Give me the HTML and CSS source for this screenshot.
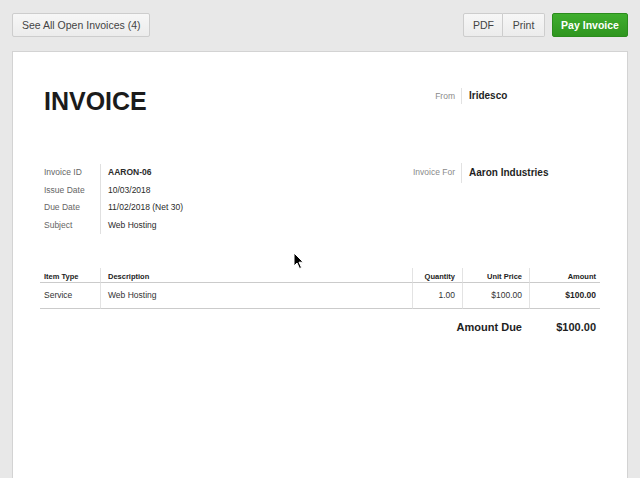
FILE: index.html
```html
<!DOCTYPE html>
<html lang="en">
<head>
<meta charset="utf-8">
<title>Invoice AARON-06</title>
<link rel="stylesheet" href="styles.css">
</head>
<body>
<div class="toolbar">
  <button class="btn">See All Open Invoices (4)</button>
  <div class="actions">
    <div class="btn-group">
      <button class="btn">PDF</button>
      <button class="btn">Print</button>
    </div>
    <button class="btn btn-pay">Pay Invoice</button>
  </div>
</div>

<div class="card">
  <div class="head-row">
    <h1 class="title">INVOICE</h1>
    <div class="party party-from">
      <span class="party-label">From</span>
      <span class="party-value">Iridesco</span>
    </div>
  </div>

  <div class="head-row details-row">
    <div class="meta">
      <div class="meta-label">Invoice ID</div><div class="meta-value strong">AARON-06</div>
      <div class="meta-label">Issue Date</div><div class="meta-value">10/03/2018</div>
      <div class="meta-label">Due Date</div><div class="meta-value">11/02/2018 (Net 30)</div>
      <div class="meta-label">Subject</div><div class="meta-value">Web Hosting</div>
    </div>
    <div class="party party-for">
      <span class="party-label">Invoice For</span>
      <span class="party-value">Aaron Industries</span>
    </div>
  </div>

  <table class="items">
    <colgroup>
      <col class="c-type"><col class="c-desc"><col class="c-qty"><col class="c-price"><col class="c-amount">
    </colgroup>
    <thead>
      <tr>
        <th class="first">Item Type</th>
        <th>Description</th>
        <th class="num">Quantity</th>
        <th class="num">Unit Price</th>
        <th class="num last">Amount</th>
      </tr>
    </thead>
    <tbody>
      <tr>
        <td class="first">Service</td>
        <td>Web Hosting</td>
        <td class="num">1.00</td>
        <td class="num">$100.00</td>
        <td class="num last strong">$100.00</td>
      </tr>
    </tbody>
    <tfoot>
      <tr>
        <td colspan="4" class="due-label">Amount Due</td>
        <td class="due-value">$100.00</td>
      </tr>
    </tfoot>
  </table>
</div>

<svg class="cursor" width="12" height="18" viewBox="0 0 12 18" aria-hidden="true">
  <path d="M1 1 L1 14 L4 11 L6.5 16.5 L8.5 15.6 L6 10.2 L10.2 10.2 Z" fill="#000" stroke="#fff" stroke-width="1"/>
</svg>
</body>
</html>
```

FILE: styles.css
```css
html, body {
  margin: 0;
  padding: 0;
}

body {
  background: #e8e8e8;
  font-family: "Liberation Sans", Arial, Helvetica, sans-serif;
  color: #222;
  height: 478px;
  overflow: hidden;
  position: relative;
}

.toolbar {
  display: flex;
  justify-content: space-between;
  align-items: flex-start;
  padding: 13px 12px 0;
}

.actions {
  display: flex;
  gap: 7px;
}

.btn-group {
  display: flex;
}

.btn {
  box-sizing: border-box;
  height: 24px;
  margin: 0;
  padding: 0 9px;
  border: 1px solid #cdcdcd;
  border-radius: 2px;
  background: linear-gradient(#f7f7f7, #ececec);
  font-family: "Liberation Sans", Arial, sans-serif;
  font-size: 10.5px;
  color: #444;
  line-height: 22px;
}

.btn-group .btn {
  padding: 0 9px;
}

.btn-group .btn:first-child {
  border-radius: 2px 0 0 2px;
  width: 40px;
}

.btn-group .btn:last-child {
  border-radius: 0 2px 2px 0;
  border-left: none;
  width: 42px;
}

.btn-pay {
  width: 76px;
  padding: 0;
  background: linear-gradient(#3fae2e, #2f961f);
  border-color: #2b8c1d;
  color: #fff;
  font-weight: bold;
}

.card {
  box-sizing: border-box;
  margin: 14px 12px 0;
  background: #fff;
  border: 1px solid #d3d3d3;
  border-bottom: none;
  padding: 34px 27px 0;
  height: 427px;
}

.head-row {
  display: flex;
  justify-content: space-between;
  align-items: flex-start;
}

.title {
  margin: 0;
  padding-left: 4px;
  font-size: 25px;
  line-height: 30px;
  font-weight: bold;
  color: #1b1b1b;
}

.party {
  display: flex;
  align-items: flex-start;
}

.party-from {
  margin-top: 2px;
}

.party-label {
  padding-right: 6px;
  font-size: 8.5px;
  line-height: 16px;
  color: #8a8a8a;
  text-align: right;
}

.party-value {
  box-sizing: border-box;
  width: 139px;
  padding-left: 7px;
  border-left: 1px solid #e2e2e2;
  font-size: 10px;
  font-weight: bold;
  line-height: 16px;
  color: #1e1e1e;
}

.details-row {
  margin-top: 48px;
}

.party-for {
  margin-top: -1px;
}

.party-for .party-label {
  line-height: 18px;
}

.party-for .party-value {
  line-height: 20px;
}

.meta {
  display: grid;
  grid-template-columns: 60px auto;
  font-size: 8.5px;
  line-height: 17.5px;
}

.meta-label {
  padding-left: 4px;
  color: #666;
}

.meta-value {
  padding-left: 7px;
  border-left: 1px solid #e0e0e0;
  color: #2a2a2a;
}

.strong {
  font-weight: bold;
}

.items {
  width: 100%;
  margin-top: 34px;
  table-layout: fixed;
  border-collapse: separate;
  border-spacing: 0;
}

.c-type { width: 60px; }
.c-qty { width: 50px; }
.c-price { width: 67px; }
.c-amount { width: 71px; }

.items th,
.items td {
  box-sizing: border-box;
  padding: 0 7px 0 7px;
  text-align: left;
  white-space: nowrap;
}

.items th {
  height: 15px;
  padding-top: 3px;
  font-size: 7.5px;
  line-height: 11px;
  font-weight: bold;
  color: #222;
  border-bottom: 1px solid #cbcbcb;
  border-left: 1px solid #e3e3e3;
}

.items tbody td {
  height: 26px;
  padding-bottom: 2px;
  font-size: 8.5px;
  color: #333;
  border-bottom: 1px solid #cbcbcb;
  border-left: 1px solid #e3e3e3;
}

.items .first {
  border-left: none;
  padding-left: 4px;
}

.items .last {
  padding-right: 4px;
}

.items .num {
  text-align: right;
}

.items tbody td.strong {
  color: #1e1e1e;
}

.items tfoot td {
  height: 36px;
  font-size: 11px;
  font-weight: bold;
  color: #1e1e1e;
  text-align: right;
}

.items tfoot .due-label {
  padding-right: 7px;
}

.items tfoot .due-value {
  padding-right: 4px;
}

.cursor {
  position: absolute;
  left: 293px;
  top: 252px;
}
```
